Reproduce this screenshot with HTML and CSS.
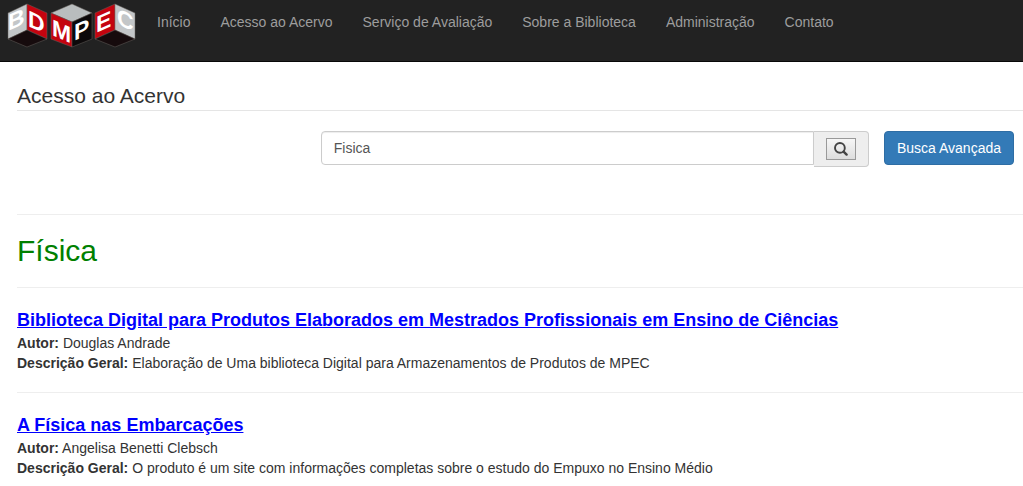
FILE: index.html
```html
<!DOCTYPE html>
<html lang="pt-BR">
<head>
<meta charset="utf-8">
<meta name="viewport" content="width=device-width, initial-scale=1">
<title>BDMPEC - Acesso ao Acervo</title>
<link rel="stylesheet" href="styles.css">
</head>
<body>
<header class="navbar">
  <a class="brand" href="#" aria-label="BDMPEC">
    <svg class="logo" width="142" height="50" viewBox="0 0 142 50" aria-hidden="true">
      <g stroke="#66605c" stroke-width=".5" stroke-linejoin="round">
        <path fill="#c3c6c8" d="M8 13 27 4v26L8 39z"/>
        <path fill="#c4040f" d="M27 4l20 9v26l-20-9z"/>
        <path fill="#160b0d" d="M8 39l19-9 20 9-20 8z"/>
        <path fill="#b9bdbe" d="M51 13l21-9 20 9-20 9z"/>
        <path fill="#c4040f" d="M51 13l21 9v25l-21-8z"/>
        <path fill="#0c090a" d="M72 22l20-9v26l-20 8z"/>
        <path fill="#c4040f" d="M95 13l20-9v26l-20 9z"/>
        <path fill="#c3c6c8" d="M115 4l20 9v26l-20-9z"/>
        <path fill="#160b0d" d="M95 39l20-9 20 9-20 8z"/>
      </g>
      <g class="logo-letters">
        <text transform="translate(8 31) skewY(-24)">B</text>
        <text transform="translate(28 26) skewY(24)">D</text>
        <text transform="translate(52 35) skewY(24)">M</text>
        <text transform="translate(74 41) skewY(-24)">P</text>
        <text transform="translate(96 33) skewY(-24)">E</text>
        <text transform="translate(117 24) skewY(24)">C</text>
      </g>
    </svg>
  </a>
  <nav class="menu">
    <a href="#">Início</a>
    <a href="#">Acesso ao Acervo</a>
    <a href="#">Serviço de Avaliação</a>
    <a href="#">Sobre a Biblioteca</a>
    <a href="#">Administração</a>
    <a href="#">Contato</a>
  </nav>
</header>
<main class="content">
  <h1 class="page-title">Acesso ao Acervo</h1>
  <form class="search">
    <div class="search-group">
      <input class="search-input" type="text" value="Fisica" aria-label="Buscar no acervo">
      <span class="search-addon">
        <button class="search-button" type="button" aria-label="Buscar">
          <svg width="14" height="14" viewBox="0 0 14 14" fill="none" stroke="#444" aria-hidden="true">
            <circle cx="5.9" cy="5.9" r="4.9" stroke-width="1.9"/>
            <path d="M9.6 9.6l3 3" stroke-width="2.4" stroke-linecap="round"/>
          </svg>
        </button>
      </span>
    </div>
    <button class="advanced" type="button">Busca Avançada</button>
  </form>
  <h2 class="subject">Física</h2>
  <article class="result">
    <h3 class="result-title"><a href="#">Biblioteca Digital para Produtos Elaborados em Mestrados Profissionais em Ensino de Ciências</a></h3>
    <p><b>Autor:</b> Douglas Andrade</p>
    <p><b>Descrição Geral:</b> Elaboração de Uma biblioteca Digital para Armazenamentos de Produtos de MPEC</p>
  </article>
  <article class="result">
    <h3 class="result-title"><a href="#">A Física nas Embarcações</a></h3>
    <p><b>Autor:</b> Angelisa Benetti Clebsch</p>
    <p><b>Descrição Geral:</b> O produto é um site com informações completas sobre o estudo do Empuxo no Ensino Médio</p>
  </article>
</main>
</body>
</html>
```

FILE: styles.css
```css
* {
  box-sizing: border-box;
}

body {
  margin: 0;
  background: #fff;
  color: #333;
  font: 14px/20px "Liberation Sans", Arial, sans-serif;
}

.navbar {
  display: flex;
  align-items: flex-start;
  min-height: 62px;
  background: #222;
  border-bottom: 1px solid #080808;
}

.brand,
.logo {
  display: block;
}

.logo-letters {
  fill: #fff;
  font: bold 23px "Liberation Sans", Arial, sans-serif;
}

.menu {
  display: flex;
  flex-wrap: wrap;
}

.menu a {
  padding: 12px 15px;
  color: #9d9d9d;
  text-decoration: none;
}

.content {
  padding-left: 17px;
}

.page-title {
  margin: 0;
  padding: 22px 0 2px;
  border-bottom: 1px solid #e5e5e5;
  font-size: 21px;
  line-height: 24px;
  font-weight: normal;
}

.search {
  display: flex;
  align-items: flex-start;
  gap: 15px;
  padding: 20px 9px 47px 30.2%;
}

.search-group {
  display: flex;
  flex: 1;
  align-items: flex-start;
}

.search-input {
  flex: 1;
  min-width: 0;
  height: 34px;
  padding: 6px 12px;
  border: 1px solid #ccc;
  border-radius: 4px 0 0 4px;
  box-shadow: inset 0 1px 1px rgba(0, 0, 0, .075);
  color: #555;
  font: inherit;
}

.search-addon {
  display: flex;
  align-items: center;
  justify-content: center;
  width: 55px;
  height: 36px;
  border: 1px solid #ccc;
  border-left: 0;
  border-radius: 0 4px 4px 0;
  background: #eee;
}

.search-button {
  display: flex;
  align-items: center;
  justify-content: center;
  width: 30px;
  height: 22px;
  padding: 0;
  border: 1px solid #999;
  background: linear-gradient(#f6f6f6, #ddd);
}

.advanced {
  height: 34px;
  padding: 6px 12px;
  border: 1px solid #2e6da4;
  border-radius: 4px;
  background: #337ab7;
  color: #fff;
  font: inherit;
}

.subject {
  margin: 0;
  padding: 20px 0;
  border-top: 1px solid #eee;
  color: green;
  font-size: 30px;
  line-height: 32px;
  font-weight: normal;
}

.result {
  padding: 20px 0 19px;
  border-top: 1px solid #eee;
}

.result-title {
  margin: 0;
  font-size: 18px;
  line-height: 25px;
}

.result-title a {
  color: #00f;
}

.result p {
  margin: 0;
}
```
